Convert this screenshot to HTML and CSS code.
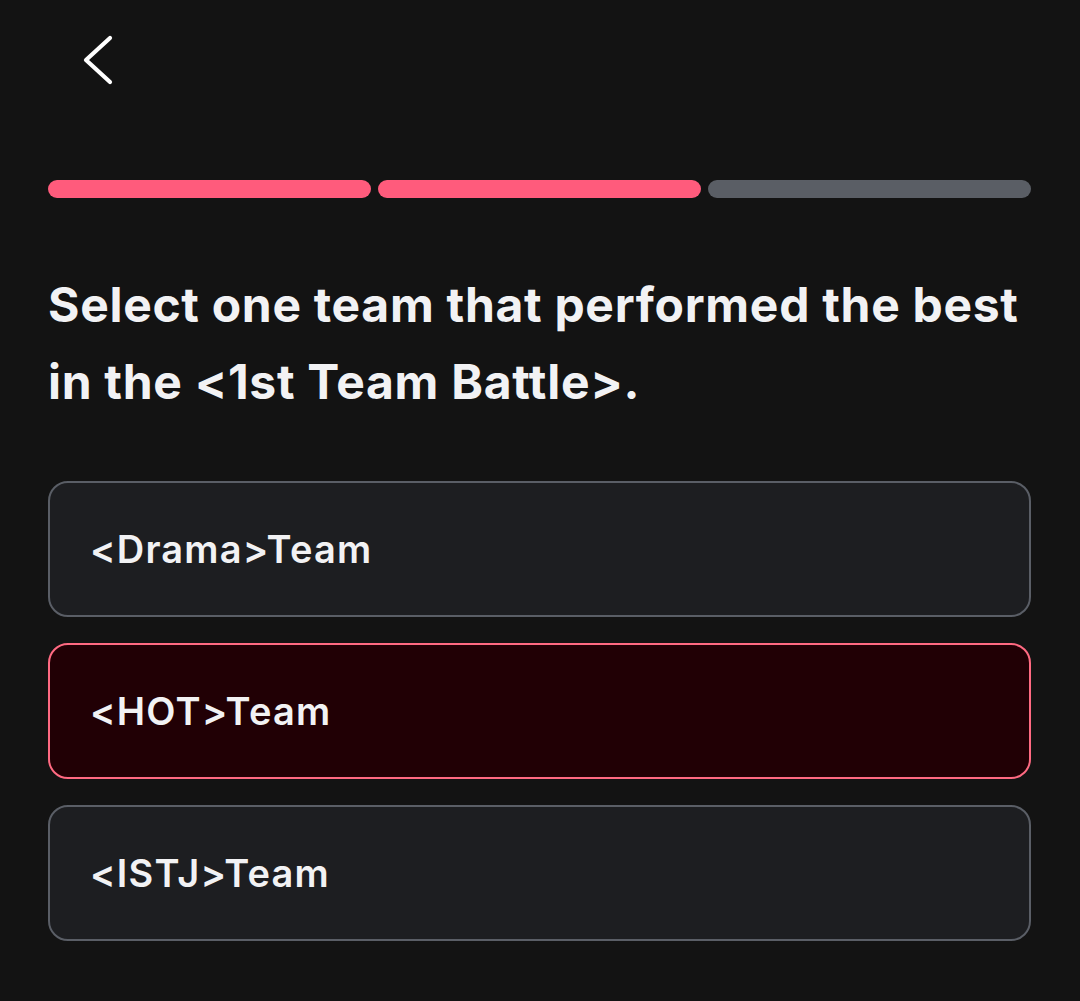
FILE: index.html
```html
<!DOCTYPE html>
<html lang="en">
<head>
<meta charset="utf-8">
<title>Team Battle</title>
<link rel="stylesheet" href="styles.css">
</head>
<body>
<div class="page">
  <header class="header">
    <button class="back" aria-label="Back">
      <svg width="40" height="60" viewBox="0 0 40 60">
        <polyline points="27,8 3,30 27,52" fill="none" stroke="#ffffff" stroke-width="4.2" stroke-linecap="round" stroke-linejoin="round"/>
      </svg>
    </button>
  </header>
  <div class="progress">
    <span class="seg done"></span>
    <span class="seg done"></span>
    <span class="seg"></span>
  </div>
  <h1 class="title">Select one team that performed the best in the &lt;1st Team Battle&gt;.</h1>
  <ul class="options">
    <li class="option">&lt;Drama&gt;Team</li>
    <li class="option selected">&lt;HOT&gt;Team</li>
    <li class="option">&lt;ISTJ&gt;Team</li>
  </ul>
</div>
</body>
</html>
```

FILE: styles.css
```css
* { box-sizing: border-box; }
html, body {
  margin: 0;
  padding: 0;
  background: #131313;
}
body {
  font-family: Inter, "Noto Sans", sans-serif;
  color: #f2f2f4;
}
.page {
  padding: 0 49px 0 48px;
}
.header {
  height: 180px;
  padding-top: 30px;
}
.back {
  display: block;
  margin-left: 35px;
  padding: 0;
  border: 0;
  background: none;
  width: 40px;
  height: 60px;
}
.back svg { display: block; }
.progress {
  display: flex;
  gap: 7px;
  height: 18px;
}
.seg {
  flex: 1;
  border-radius: 9px;
  background: #5a5e65;
}
.seg.done { background: #ff5b7c; }
.title {
  margin: 68px 0 0;
  font-size: 48px;
  line-height: 77px;
  font-weight: 700;
  letter-spacing: 0.7px;
}
.options {
  list-style: none;
  margin: 61px 0 0;
  padding: 0;
  display: flex;
  flex-direction: column;
  gap: 26px;
}
.option {
  height: 136px;
  display: flex;
  align-items: center;
  padding: 0 40px;
  border: 2px solid #5a5e66;
  border-radius: 20px;
  background: #1d1e21;
  font-size: 38px;
  font-weight: 600;
  letter-spacing: 1.2px;
}
.option.selected {
  border-color: #ff6a82;
  background: #210005;
}
```
